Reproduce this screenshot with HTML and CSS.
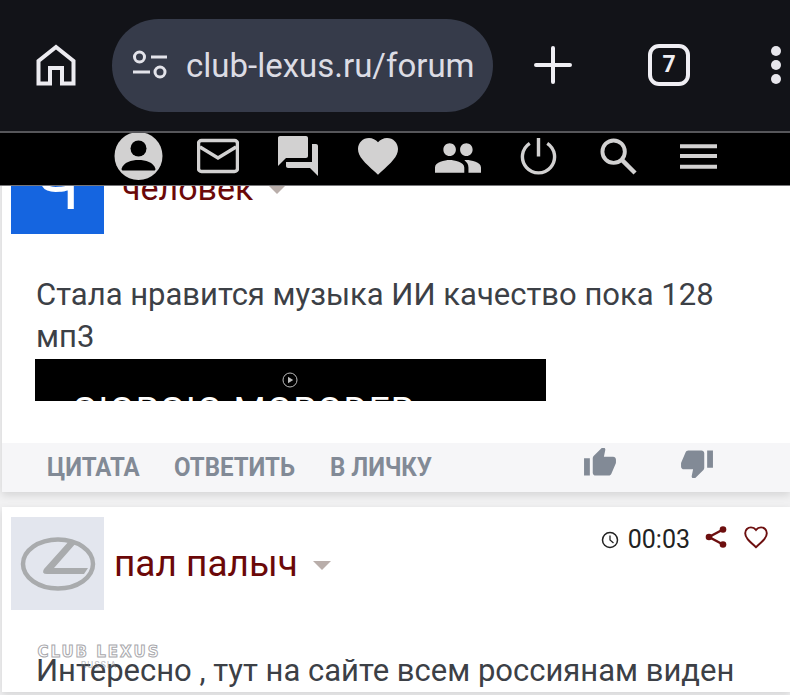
FILE: index.html
```html
<!DOCTYPE html>
<html>
	<head>
		<meta charset="utf-8">
		<title>club-lexus.ru</title>
		<link rel="stylesheet" href="styles.css">
	</head>
	<body>
	<div class="screen">
		<!--browser-->
		<div class="browser">
			<svg class="b_home" viewBox="0 0 40 42"><path d="M2.5 39.5V17L20 3l17.500 14v22.500H26V24H14v15.500z" fill="none" stroke="#ecebf0" stroke-width="4"/></svg>
			<div class="b_url">
				<svg class="b_tune" viewBox="0 0 36 30"><g fill="none" stroke="#e3e3ea" stroke-width="3"><circle cx="7.500" cy="7" r="5"/><circle cx="28" cy="22" r="5"/><path d="M19 7h16M1 22h17"/></g></svg>
				<span class="b_addr">club-lexus.ru/forum</span>
			</div>
			<svg class="b_plus" viewBox="0 0 38 38"><path d="M19 2v34M2 19h34" stroke="#f0eff4" stroke-width="4" stroke-linecap="round"/></svg>
			<div class="b_tabs">7</div>
			<div class="b_more"><i></i><i></i><i></i></div>
		</div>
		<!--menu-->
		<div class="nav">
			<div class="nav_i"><svg class="i48" viewBox="0 0 48 48"><circle cx="24" cy="24" r="24" fill="#d2d1d1"/><circle cx="24" cy="16.500" r="8" fill="#000"/><path d="M7 37c2-7 10-9 17-9s15 2 17 9c0 .8-.5 1.500-1.500 1.500h-31C7.500 38.500 7 37.800 7 37z" fill="#000"/></svg></div>
			<div class="nav_i"><svg class="i42" viewBox="0 0 42 34"><path d="M4.500 1.500h33a3 3 0 0 1 3 3v25a3 3 0 0 1-3 3h-33a3 3 0 0 1-3-3v-25a3 3 0 0 1 3-3zM3 8l18 11L39 8" fill="none" stroke="#d2d1d1" stroke-width="3.500"/></svg></div>
			<div class="nav_i"><svg class="i42" viewBox="2 2 20 20"><path fill="#d2d1d1" d="M21 6h-2v9H6v2c0 .55.45 1 1 1h11l4 4V7c0-.55-.45-1-1-1zm-4 6V3c0-.55-.45-1-1-1H3c-.55 0-1 .45-1 1v14l4-4h10c.55 0 1-.45 1-1z"/></svg></div>
			<div class="nav_i"><svg class="i42" viewBox="2 2 20 20"><path fill="#d2d1d1" d="M12 21.350l-1.450-1.320C5.400 15.360 2 12.280 2 8.500 2 5.420 4.420 3 7.500 3c1.740 0 3.410.81 4.500 2.090C13.090 3.810 14.760 3 16.500 3 19.580 3 22 5.420 22 8.500c0 3.780-3.400 6.860-8.550 11.540L12 21.350z"/></svg></div>
			<div class="nav_i"><svg class="i46" viewBox="1 5 22 14"><path fill="#d2d1d1" d="M16 11c1.660 0 2.990-1.340 2.990-3S17.660 5 16 5c-1.660 0-3 1.340-3 3s1.340 3 3 3zm-8 0c1.660 0 2.990-1.340 2.990-3S9.660 5 8 5C6.340 5 5 6.340 5 8s1.340 3 3 3zm0 2c-2.330 0-7 1.170-7 3.500V19h14v-2.500c0-2.330-4.670-3.500-7-3.500zm8 0c-.29 0-.62.02-.97.05 1.160.84 1.970 1.970 1.970 3.450V19h6v-2.500c0-2.330-4.670-3.500-7-3.500z"/></svg></div>
			<div class="nav_i"><svg class="i38" viewBox="0 0 38 38"><path d="M19 0v19M10 5.500a16.500 16.500 0 1 0 18 0" fill="none" stroke="#d2d1d1" stroke-width="3.500"/></svg></div>
			<div class="nav_i"><svg class="i38" viewBox="0 0 38 38"><circle cx="14" cy="14" r="11.500" fill="none" stroke="#d2d1d1" stroke-width="4"/><path d="M23 23l13 13" stroke="#d2d1d1" stroke-width="4.500"/></svg></div>
			<div class="nav_i"><svg class="i38" viewBox="0 0 38 26"><path d="M0 2.500h38M0 12.500h38M0 23.500h38" stroke="#d2d1d1" stroke-width="4"/></svg></div>
		</div>
		<!--posts-->
		<div class="thread">
			<div class="post">
				<div class="post_head">
					<div class="ava ava_blue">Ч</div>
					<span class="name name_small">человек</span>
					<i class="caret"></i>
				</div>
				<p class="post_text">Стала нравится музыка ИИ качество пока 128<br>мп3</p>
				<div class="video">
					<svg class="play" viewBox="0 0 16 16"><circle cx="8" cy="8" r="7" fill="none" stroke="#bbb" stroke-width="1"/><path d="M6 4.800v6.400L11.200 8z" fill="#bbb"/></svg>
					<div class="video_title">GIORGIO MORODER</div>
				</div>
				<div class="actions">
					<span>ЦИТАТА</span>
					<span>ОТВЕТИТЬ</span>
					<span>В ЛИЧКУ</span>
					<svg class="thumb thumb_up" viewBox="1 2 22 20"><path fill="#828a96" d="M1 21h4V9H1v12zm22-11c0-1.100-.9-2-2-2h-6.310l.95-4.570.03-.32c0-.41-.17-.79-.44-1.060L14.170 1 7.590 7.590C7.220 7.950 7 8.450 7 9v10c0 1.100.9 2 2 2h9c.83 0 1.540-.5 1.840-1.220l3.020-7.050c.09-.23.14-.47.14-.73v-2z"/></svg>
					<svg class="thumb thumb_down" viewBox="1 2 22 20"><path fill="#828a96" d="M15 3H6c-.83 0-1.540.5-1.840 1.220l-3.020 7.050c-.09.23-.14.47-.14.730v2c0 1.100.9 2 2 2h6.310l-.95 4.570-.03.32c0 .41.17.79.44 1.060L9.830 23l6.590-6.590c.36-.36.58-.86.58-1.410V5c0-1.100-.9-2-2-2zm4 0v12h4V3h-4z"/></svg>
				</div>
			</div>
			<div class="post">
				<div class="post_head">
					<div class="ava ava_grey">
						<svg class="lexus" viewBox="0 0 76 56"><ellipse cx="38" cy="28" rx="35" ry="24.500" fill="none" stroke="#a9abad" stroke-width="4.500"/><path d="M50 4L24 33q-3 5 3 5h37l4-6H34L56 7z" fill="#a9abad"/></svg>
					</div>
					<span class="name">пал палыч</span>
					<i class="caret"></i>
					<div class="meta">
						<svg class="clock" viewBox="0 0 18 18"><circle cx="9" cy="9" r="7.500" fill="none" stroke="#222" stroke-width="1.500"/><path d="M9 4.500V9l3.500 3" fill="none" stroke="#222" stroke-width="1.300"/></svg>
						<span class="time">00:03</span>
						<svg class="share" viewBox="0 0 22 22"><path d="M18 3.500L4 11l14 7.500" fill="none" stroke="#6d0f0f" stroke-width="2.400"/><circle cx="18" cy="3.500" r="3.300" fill="#6d0f0f"/><circle cx="4" cy="11" r="3.300" fill="#6d0f0f"/><circle cx="18" cy="18.500" r="3.300" fill="#6d0f0f"/></svg>
						<svg class="like" viewBox="2 2 20 20"><path fill="none" stroke="#6d0f0f" stroke-width="1.600" d="M12 20.500l-1.300-1.200C6 15 3 12.300 3 8.800 3 6 5.200 4 7.800 4c1.600 0 3.200.8 4.200 2.100C13 4.800 14.600 4 16.200 4 18.800 4 21 6 21 8.800c0 3.500-3 6.200-7.700 10.500L12 20.500z"/></svg>
					</div>
				</div>
				<p class="post_text">Интересно , тут на сайте всем россиянам виден</p>
			</div>
		</div>
		<div class="mark">
			<div class="mark_t">CLUB LEXUS</div>
			<div class="mark_s">RUSSIA</div>
		</div>
	</div>
	</body>
</html>
```
FILE: styles.css
```css
*{margin:0px;padding:0px;box-sizing:border-box;}
body{width:790px;height:695px;overflow:hidden;background:#f1f1f2;font-family:Roboto,"Noto Sans",sans-serif;}
.screen{width:790px;height:695px;position:relative;overflow:hidden;}
svg{display:block;}
/*browser*/
.browser{height:133px;background:#121318;border-bottom:2px solid #56565a;display:flex;align-items:center;padding:0 0 1px 36px;position:relative;z-index:3;}
.b_home{width:40px;height:42px;flex:none;}
.b_url{width:381px;height:93px;margin-left:36px;border-radius:47px;background:#363b4a;display:flex;align-items:center;padding-left:20px;flex:none;overflow:hidden;}
.b_tune{width:36px;height:30px;flex:none;}
.b_addr{width:287px;margin-left:18px;font-size:33px;color:#dcdce4;white-space:nowrap;overflow:hidden;flex:none;}
.b_plus{width:38px;height:38px;margin-left:41px;flex:none;}
.b_tabs{width:42px;height:42px;margin-left:76px;border:4px solid #efeef3;border-radius:11px;color:#efeef3;font-size:23px;font-weight:700;line-height:33px;text-align:center;flex:none;}
.b_more{margin-left:81px;display:flex;flex-direction:column;gap:4px;flex:none;}
.b_more i{display:block;width:10px;height:10px;border-radius:50%;background:#e7e6ec;}
/*menu*/
.nav{height:53px;background:#000;border-bottom:1px solid #77777a;display:flex;align-items:center;padding-left:98px;position:relative;z-index:2;}
.nav_i{width:80px;display:flex;justify-content:center;align-items:center;}
.i48{width:49px;height:48px;margin-top:-7px;}
.i42{width:42px;height:40px;margin-top:-6px;}
.i46{width:46px;height:30px;margin-top:-3px;}
.i38{width:37px;height:37px;margin-top:-6px;}
/*posts*/
.thread{margin-top:-55px;padding-left:2px;}
.post{background:#fff;margin-bottom:15px;box-shadow:0 3px 8px rgba(0,0,0,.12);}
.post_head{display:flex;align-items:center;padding:10px 22px 0 9px;}
.ava{width:93px;height:93px;flex:none;display:flex;align-items:center;justify-content:center;}
.ava_blue{background:#1565e0;color:#fff;font-size:64px;line-height:1;}
.ava_grey{background:#e3e6ee;}
.lexus{width:76px;height:56px;}
.name{margin-left:10px;font-size:37px;color:#6b0808;}
.name_small{margin-left:18px;font-size:34px;}
.caret{width:0;height:0;margin:4px 0 0 15px;border-left:9px solid transparent;border-right:9px solid transparent;border-top:9px solid #b9aeaa;}
.meta{margin-left:auto;align-self:flex-start;display:flex;align-items:center;margin-top:8px;}
.clock{width:18px;height:18px;}
.time{margin-left:9px;font-size:25px;color:#222;}
.share{width:22px;height:22px;margin:-6px 0 0 15px;}
.like{width:24px;height:24px;margin:-6px 0 0 17px;}
.post_text{padding:40px 20px 0 34px;font-size:31px;line-height:42px;color:#3c4046;white-space:nowrap;}
.video{width:511px;height:42px;margin:1px 0 0 33px;background:#000;overflow:hidden;padding-top:13px;}
.play{width:16px;height:16px;margin-left:247px;}
.video_title{margin:4px 0 0 37px;color:#fff;font-size:37px;line-height:37px;letter-spacing:1px;white-space:nowrap;}
.actions{height:49px;margin-top:42px;background:#f6f6f8;display:flex;align-items:center;padding-left:45px;font-size:25px;font-weight:700;color:#828a96;}
.actions span{margin-right:30px;transform:scaleX(.96);transform-origin:left;}
.thumb{width:32px;height:29px;margin-top:-11px;flex:none;}
.thumb_up{margin-left:118px;}
.thumb_down{margin-left:65px;margin-top:-8px;}
/*watermark*/
.mark{position:absolute;left:24px;top:645px;width:150px;text-align:center;}
.mark_t{font-family:"DejaVu Sans",sans-serif;font-size:15px;line-height:14px;font-weight:700;letter-spacing:2px;color:rgba(255,255,255,.85);-webkit-text-stroke:1px #a9a9ad;white-space:nowrap;}
.mark_s{font-size:9px;line-height:12px;letter-spacing:1px;color:rgba(130,130,135,.55);}
```
